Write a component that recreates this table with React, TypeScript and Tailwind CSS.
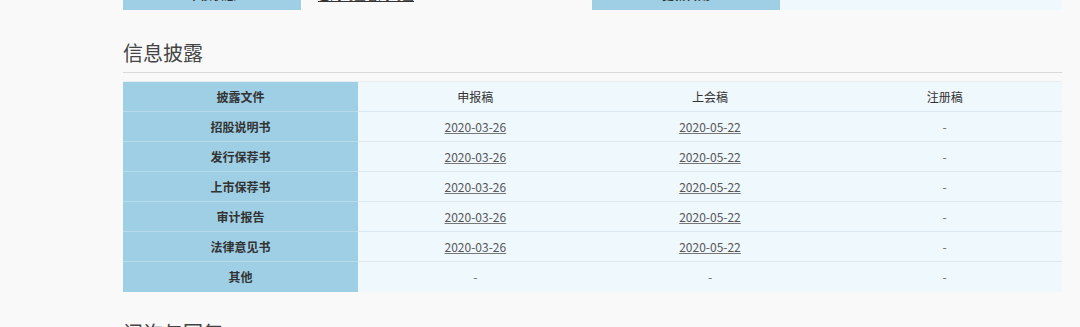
const rows = [
  { name: "招股说明书", a: "2020-03-26", b: "2020-05-22", c: "-" },
  { name: "发行保荐书", a: "2020-03-26", b: "2020-05-22", c: "-" },
  { name: "上市保荐书", a: "2020-03-26", b: "2020-05-22", c: "-" },
  { name: "审计报告", a: "2020-03-26", b: "2020-05-22", c: "-" },
  { name: "法律意见书", a: "2020-03-26", b: "2020-05-22", c: "-" },
  { name: "其他", a: "-", b: "-", c: "-" },
];

function Cell({ value }: { value: string }) {
  return (
    <td className="border-t border-[#dbe8ef] text-center">
      {value === "-" ? (
        <span className="text-[#666]">-</span>
      ) : (
        <a className="text-[#555] underline decoration-[#777]">{value}</a>
      )}
    </td>
  );
}

export default function App() {
  return (
    <div
      className="h-[327px] overflow-hidden bg-[#f9f9f9] text-[12px] text-[#333]"
      style={{ fontFamily: '"Noto Sans CJK SC", "Liberation Sans", sans-serif' }}
    >
      <div className="mx-[123px] w-[939px]">
        {/* previous block, scrolled mostly out of view */}
        <table className="-mt-[20px] w-full table-fixed border-collapse">
          <tbody>
            <tr className="h-[30px]">
              <td className="w-[178px] bg-[#9ecfe5] text-center font-bold">审核状态</td>
              <td className="w-[291px] bg-[#f9f9f9] pl-[17px]">
                <a className="underline">已问询查看问询函</a>
              </td>
              <td className="w-[188px] bg-[#9ecfe5] text-center font-bold">更新日期</td>
              <td className="bg-[#eff8fd] pl-[6px]">2020-05-22</td>
            </tr>
          </tbody>
        </table>

        <h2 className="mt-[29px] border-b border-[#d9d9d9] pb-[5px] text-[20px] leading-[28px] text-[#444]">
          信息披露
        </h2>

        <table className="mt-[8px] w-full table-fixed border-collapse">
          <thead>
            <tr className="h-[30px] border-t border-[#e6eef2]">
              <th className="w-[235px] bg-[#9ecfe5] font-bold">披露文件</th>
              <th className="bg-[#eff8fd] font-normal">申报稿</th>
              <th className="bg-[#eff8fd] font-normal">上会稿</th>
              <th className="bg-[#eff8fd] font-normal">注册稿</th>
            </tr>
          </thead>
          <tbody className="bg-[#eff8fd]">
            {rows.map((r) => (
              <tr key={r.name} className="h-[30px]">
                <td className="border-t border-[#b7dcec] bg-[#9ecfe5] text-center font-bold">
                  {r.name}
                </td>
                <Cell value={r.a} />
                <Cell value={r.b} />
                <Cell value={r.c} />
              </tr>
            ))}
          </tbody>
        </table>

        <h2 className="mt-[27px] text-[20px] leading-[28px] text-[#444]">问询与回复</h2>
      </div>
    </div>
  );
}
